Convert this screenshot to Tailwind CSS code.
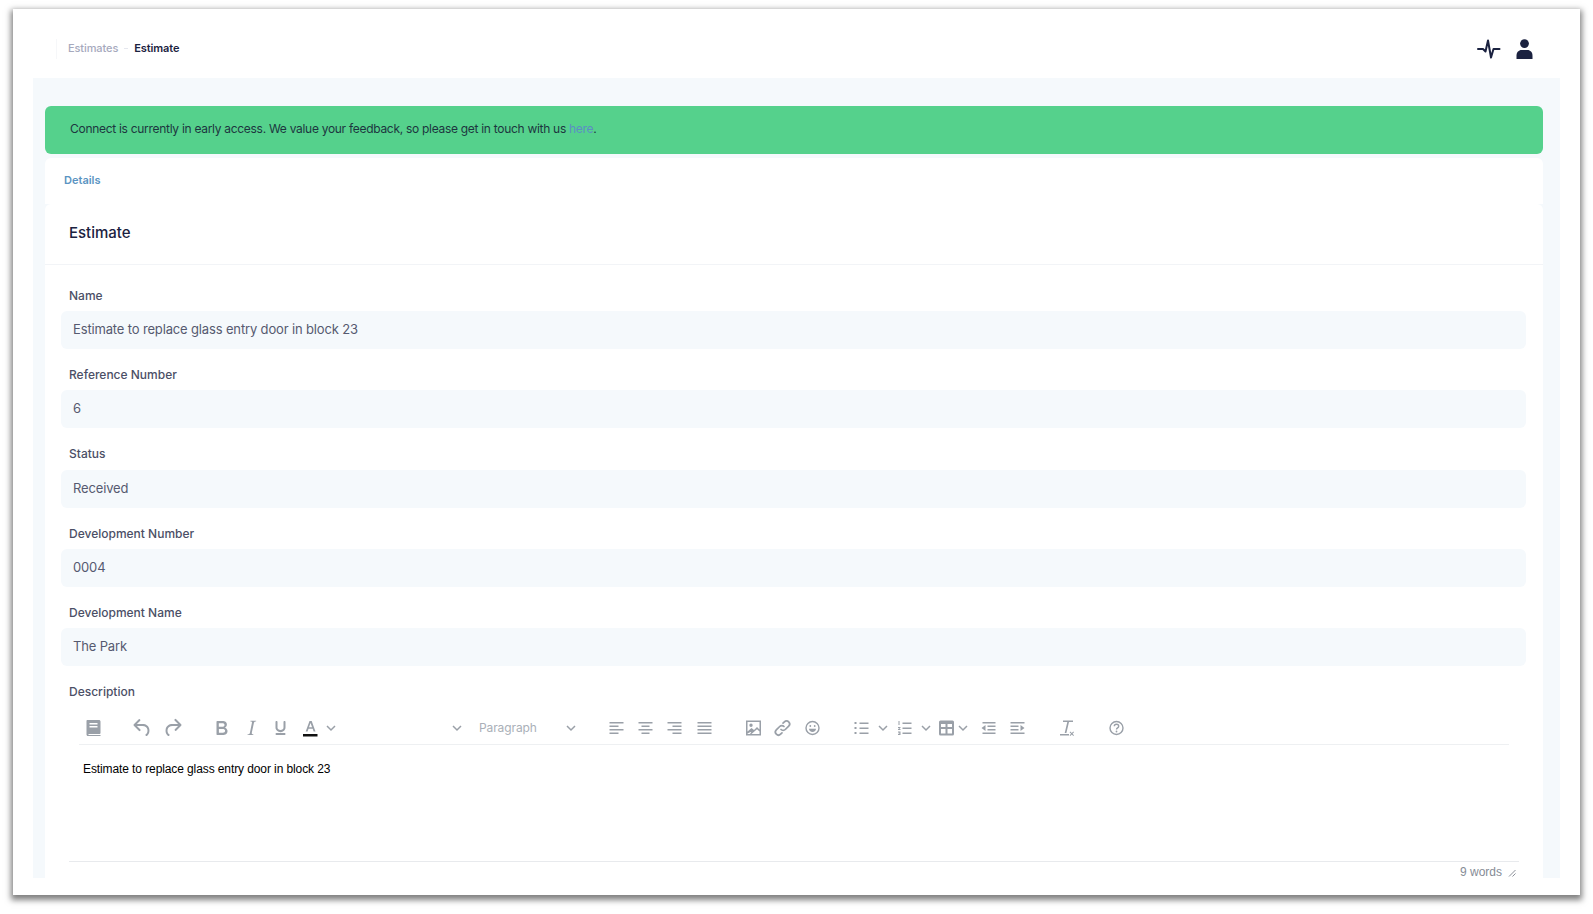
<!DOCTYPE html>
<html lang="en">
<head>
  <meta charset="UTF-8">
  <title>Estimate</title>
  <script src="https://cdn.jsdelivr.net/npm/@tailwindcss/browser@4"></script>
</head>
<body class="bg-white h-screen overflow-hidden font-['Inter','Liberation_Sans',sans-serif]">

  <!-- Window -->
  <div class="ml-[13px] mt-[9px] w-[1567px] h-[886px] px-5 bg-white shadow-[0_3px_6px_2px_rgba(0,0,0,0.5)]">

    <!-- Top bar -->
    <header class="h-[69px] pt-[10px] flex items-center justify-between">
      <nav class="flex items-center h-5 ml-[23px] pl-[11px] border-l border-[#f6f7f9] text-[11px] font-medium tracking-[-0.1px]">
        <span class="text-[#a6a9bd]">Estimates</span>
        <span class="w-[4px] h-px mx-[6px] bg-[#e5e7ee]"></span>
        <span class="text-[#1b2240] font-semibold">Estimate</span>
      </nav>
      <div class="flex items-center gap-[15px] mr-[27px]">
        <svg class="w-[24px] h-[20px]" viewBox="0 0 24 20" fill="none" stroke="#1b2240" stroke-width="2" stroke-linecap="round" stroke-linejoin="round"><path d="M1 10h5l2.500 2.500 2.500-11 3 17 2.500-8.500h6"/></svg>
        <svg class="w-[17px] h-[20px]" viewBox="0 0 17 20" fill="#1b2240"><circle cx="8.500" cy="4.600" r="4.400"/><path d="M0.500 20v-3.500c0-3.200 2.300-5.500 5-5.500h6c2.700 0 5 2.300 5 5.500V20z"/></svg>
      </div>
    </header>

    <!-- Main area -->
    <main class="h-[800px] bg-[#f5f9fc] pt-7 pl-3 pr-[17px] overflow-hidden">
      <div class="h-12 pb-[2px] flex items-center pl-[25px] rounded-md bg-[#55d18c] text-[12px] text-[#1d3640] tracking-[-0.29px]">
        <p>Connect is currently in early access. We value your feedback, so please get in touch with us <a class="text-[#5b8fc4]">here</a>.</p>
      </div>

      <div class="h-[46px] mt-1 pb-[2px] flex items-center pl-[19px] rounded-t-md bg-white text-[11px] font-semibold text-[#5a94c2]">Details</div>

      <section class="h-[674px] bg-white rounded-t-md">
        <div class="h-[61px] pb-[2px] flex items-center pl-6 border-b border-[#f2f4f7] text-[15px] font-medium text-[#1b2240]">Estimate</div>

        <div class="pt-[22px] pl-4 pr-[17px]">
          <div class="flex flex-col gap-[17px] text-[#565a70] tracking-[-0.15px]">
            <div>
              <label class="block h-[18px] mb-1.5 pl-2 text-[12px] leading-[18px] font-medium text-[#4b4f66] tracking-normal">Name</label>
              <div class="h-[38px] flex items-center pl-3 rounded-md bg-[#f5f9fc] text-[13px]">Estimate to replace glass entry door in block 23</div>
            </div>
            <div>
              <label class="block h-[18px] mb-1.5 pl-2 text-[12px] leading-[18px] font-medium text-[#4b4f66] tracking-normal">Reference Number</label>
              <div class="h-[38px] flex items-center pl-3 rounded-md bg-[#f5f9fc] text-[13px]">6</div>
            </div>
            <div>
              <label class="block h-[18px] mb-[7px] pl-2 text-[12px] leading-[18px] font-medium text-[#4b4f66] tracking-normal">Status</label>
              <div class="h-[38px] flex items-center pl-3 rounded-md bg-[#f5f9fc] text-[13px]">Received</div>
            </div>
            <div>
              <label class="block h-[18px] mb-1.5 pl-2 text-[12px] leading-[18px] font-medium text-[#4b4f66] tracking-normal">Development Number</label>
              <div class="h-[38px] flex items-center pl-3 rounded-md bg-[#f5f9fc] text-[13px]">0004</div>
            </div>
            <div>
              <label class="block h-[18px] mb-1.5 pl-2 text-[12px] leading-[18px] font-medium text-[#4b4f66] tracking-normal">Development Name</label>
              <div class="h-[38px] flex items-center pl-3 rounded-md bg-[#f5f9fc] text-[13px]">The Park</div>
            </div>
            <label class="block h-[18px] pl-2 text-[12px] leading-[18px] font-medium text-[#4b4f66] tracking-normal">Description</label>
          </div>

          <!-- Editor -->
          <div class="mt-[10px] ml-2 mr-[7px] h-[166px] flex flex-col">
            <div class="h-[34px] mx-[10px] flex items-center border-b border-[#eef0f2] text-[#9aa0a8]">
              <svg class="w-[29px] h-6" viewBox="0 0 24 24" fill="currentColor"><path d="M6 4h11.500c.8 0 1.500.7 1.500 1.500V17c0 .5-.4 1-1 1H7v1h12v1H6.500C5.600 20 5 19.300 5 18.500V5c0-.6.4-1 1-1zm2 3v1.500h8V7zm0 3v1.500h8V10z"/></svg>
              <svg class="ml-5 w-[29px] h-6" viewBox="0 0 24 24" fill="currentColor"><path d="M6.400 8H12c3.700 0 6.200 2 6.800 5.100.6 2.700-.4 5.600-2.300 6.800a1 1 0 0 1-1-1.800c1.100-.6 1.800-2.700 1.400-4.600-.5-2.100-2.100-3.500-4.900-3.500H6.400l3.300 3.300a1 1 0 1 1-1.400 1.400l-5-5a1 1 0 0 1 0-1.400l5-5a1 1 0 0 1 1.400 1.400L6.400 8z"/></svg>
              <svg class="ml-[1px] w-[29px] h-6" viewBox="0 0 24 24" fill="currentColor"><path d="M17.600 10H12c-2.800 0-4.400 1.400-4.900 3.500-.4 2 .3 4 1.400 4.600a1 1 0 1 1-1 1.800c-2-1.200-2.900-4.100-2.300-6.800.6-3 3-5.100 6.800-5.100h5.600l-3.300-3.300a1 1 0 1 1 1.400-1.400l5 5a1 1 0 0 1 0 1.400l-5 5a1 1 0 0 1-1.400-1.400l3.300-3.300z"/></svg>
              <svg class="ml-5 w-[29px] h-6" viewBox="0 0 24 24" fill="currentColor"><path d="M7.800 19c-.3 0-.5 0-.6-.2l-.2-.5V5.700c0-.2 0-.4.200-.5l.6-.2h5c1.500 0 2.700.3 3.500 1 .7.6 1.100 1.400 1.100 2.500a3 3 0 0 1-.6 1.900c-.4.600-1 1-1.600 1.200.4.100.9.300 1.300.6s.8.700 1 1.200c.4.400.5 1 .5 1.600 0 1.300-.4 2.300-1.300 3-.8.700-2.100 1-3.800 1H7.800zm5-8.300c.6 0 1.200-.1 1.600-.5.400-.3.6-.7.6-1.300 0-1.100-.8-1.700-2.300-1.700H9.300v3.500h3.500zm.5 6c.7 0 1.300-.1 1.700-.4.400-.4.600-.9.600-1.500s-.2-1-.7-1.400c-.4-.3-1-.4-2-.4H9.400v3.700h3.900z"/></svg>
              <svg class="ml-px w-[29px] h-6" viewBox="0 0 24 24" fill="currentColor"><path d="M16.700 4.700l-.1.9h-.3c-.6 0-1 0-1.400.3-.3.3-.4.600-.5 1.100l-2.100 9.800v.6c0 .5.400.8 1.400.8h.2l-.2.800H8l.2-.8h.2c1.100 0 1.800-.5 2-1.500l2-9.800.1-.5c0-.6-.4-.8-1.400-.8h-.3l.2-.9h5.800z"/></svg>
              <svg class="w-[29px] h-6" viewBox="0 0 24 24" fill="currentColor"><path d="M16 5c.6 0 1 .4 1 1v5.500a4 4 0 0 1-.4 1.800l-1 1.400a5.300 5.300 0 0 1-5.500 1 5 5 0 0 1-1.600-1c-.5-.4-.8-.9-1.100-1.400a4 4 0 0 1-.4-1.800V6c0-.6.400-1 1-1s1 .4 1 1v5.500c0 .3 0 .6.200 1l.6.700a3.300 3.300 0 0 0 2.200.8 3.400 3.400 0 0 0 2.200-.8c.3-.2.400-.5.600-.8l.2-.9V6c0-.6.400-1 1-1zM8 17h8c.6 0 1 .4 1 1s-.4 1-1 1H8a1 1 0 0 1 0-2z"/></svg>
              <svg class="ml-px w-[29px] h-6" viewBox="0 0 24 24" fill="currentColor"><path d="M6 18h13v2.500H4.500V18z" fill="#111"/><path d="M11 5h2.200l3.800 10.500h-1.900l-.9-2.700h-4.200l-.9 2.700H7.200zm-.5 6.300h3.100L12 6.900z"/></svg>
              <svg class="w-3 h-6" viewBox="0 0 12 24" fill="none" stroke="currentColor" stroke-width="1.500"><path d="M2 10l4 4 4-4"/></svg>
              <svg class="ml-[114px] w-3 h-6" viewBox="0 0 12 24" fill="none" stroke="currentColor" stroke-width="1.500"><path d="M2 10l4 4 4-4"/></svg>
              <span class="ml-4 w-[86px] text-[12px] text-[#aab0b8] tracking-[-0.1px]">Paragraph</span>
              <svg class="w-3 h-6" viewBox="0 0 12 24" fill="none" stroke="currentColor" stroke-width="1.500"><path d="M2 10l4 4 4-4"/></svg>
              <svg class="ml-[25px] w-[29px] h-6" viewBox="0 0 24 24" fill="currentColor"><path d="M5 6h14v1.500H5zm0 3.500h9V11H5zM5 13h14v1.500H5zm0 3.500h9V18H5z"/></svg>
              <svg class="w-[29px] h-6" viewBox="0 0 24 24" fill="currentColor"><path d="M5 6h14v1.500H5zm3 3.500h8V11H8zM5 13h14v1.500H5zm3 3.500h8V18H8z"/></svg>
              <svg class="w-[29px] h-6" viewBox="0 0 24 24" fill="currentColor"><path d="M5 6h14v1.500H5zm5 3.500h9V11h-9zM5 13h14v1.500H5zm5 3.500h9V18h-9z"/></svg>
              <svg class="ml-px w-[29px] h-6" viewBox="0 0 24 24" fill="currentColor"><path d="M5 6h14v1.500H5zm0 3.500h14V11H5zM5 13h14v1.500H5zm0 3.500h14V18H5z"/></svg>
              <svg class="ml-5 w-[29px] h-6" viewBox="0 0 24 24" fill="currentColor"><path d="M4.500 4.500h15v15h-15zM6 6v9.500l4-3.500 2.500 2 3-3L18 13.500V6zm12 9.500l-2.500-2.200-5.500 4.700h8zM6 17.500V18h2.300l1.500-1.400-.8-.6zM9.500 7.500a1.700 1.700 0 1 1 0 3.400 1.700 1.700 0 0 1 0-3.400z"/></svg>
              <svg class="w-[29px] h-6" viewBox="0 0 24 24" fill="none" stroke="currentColor" stroke-width="1.700" stroke-linecap="round"><path d="M10.500 13.500a3 3 0 0 0 4.300 0l3.400-3.400a3 3 0 0 0-4.300-4.300L12.500 7.200"/><path d="M13.500 10.500a3 3 0 0 0-4.300 0l-3.400 3.400a3 3 0 0 0 4.300 4.300l1.400-1.400"/></svg>
              <svg class="ml-px w-[29px] h-6" viewBox="0 0 24 24" fill="none" stroke="currentColor" stroke-width="1.400"><circle cx="12" cy="12" r="6.500"/><path d="M8.500 12.800h7c0 2-1.500 3.200-3.500 3.200s-3.500-1.200-3.500-3.200z" fill="currentColor" stroke="none"/><circle cx="9.800" cy="10" r=".9" fill="currentColor" stroke="none"/><circle cx="14.200" cy="10" r=".9" fill="currentColor" stroke="none"/></svg>
              <svg class="ml-5 w-[29px] h-6" viewBox="0 0 24 24" fill="currentColor"><path d="M10 6.500h9V8h-9zm0 5h9V13h-9zm0 5h9V18h-9zM5 6h2v2H5zm0 5h2v2H5zm0 5h2v2H5z"/></svg>
              <svg class="ml-px w-3 h-6" viewBox="0 0 12 24" fill="none" stroke="currentColor" stroke-width="1.500"><path d="M2 10l4 4 4-4"/></svg>
              <svg class="ml-px w-[29px] h-6" viewBox="0 0 24 24" fill="currentColor"><path d="M10 6.500h9V8h-9zm0 5h9V13h-9zm0 5h9V18h-9zM6 5h1v4H6zM5.500 11H8v.8l-1.300 1.200H8v1H5.500v-.8L6.800 12H5.500zm0 4.500H8v3.500H5.500V18H7v-.4H6v-.8h1v-.4H5.500z"/></svg>
              <svg class="ml-px w-3 h-6" viewBox="0 0 12 24" fill="none" stroke="currentColor" stroke-width="1.500"><path d="M2 10l4 4 4-4"/></svg>
              <svg class="w-[29px] h-6" viewBox="0 0 24 24" fill="currentColor"><path d="M6 4.500h12A1.500 1.500 0 0 1 19.500 6v12a1.500 1.500 0 0 1-1.500 1.500H6A1.500 1.500 0 0 1 4.500 18V6A1.500 1.500 0 0 1 6 4.500zM6.500 8v3H11V8zM13 8v3h4.500V8zm-6.500 5v4.500H11V13zm6.500 0v4.500h4.500V13z"/></svg>
              <svg class="-ml-[4px] w-3 h-6" viewBox="0 0 12 24" fill="none" stroke="currentColor" stroke-width="1.500"><path d="M2 10l4 4 4-4"/></svg>
              <svg class="ml-[5px] w-[29px] h-6" viewBox="0 0 24 24" fill="currentColor"><path d="M6 6h13v1.500H6zm5 3.500h8V11h-8zm0 3.500h8v1.500h-8zM6 16.500h13V18H6zM9 9v6l-4-3z"/></svg>
              <svg class="w-[29px] h-6" viewBox="0 0 24 24" fill="currentColor"><path d="M5 6h14v1.500H5zm0 3.500h8V11H5zM5 13h8v1.500H5zm0 3.500h14V18H5zM15 9v6l4-3z"/></svg>
              <svg class="ml-5 w-[29px] h-6" viewBox="0 0 24 24" fill="currentColor"><path d="M8.500 4.500h10V6h-4l-2.600 11h-1.700L12.800 6H8.500zM5.500 18h9v1.500h-9zM15.800 15.500l1.500 1.500 1.500-1.500.7.700-1.500 1.500 1.500 1.500-.7.700-1.500-1.500-1.500 1.500-.7-.7 1.500-1.500-1.500-1.500z"/></svg>
              <svg class="ml-[21px] w-[29px] h-6" viewBox="0 0 24 24" fill="none" stroke="currentColor" stroke-width="1.400"><circle cx="12" cy="12" r="6.500"/><path d="M9.800 10.300c0-1.300 1-2.100 2.200-2.100s2.200.8 2.200 2c0 1.700-2.200 1.600-2.200 3.300"/><circle cx="12" cy="15.500" r=".9" fill="currentColor" stroke="none"/></svg>
            </div>
            <div class="flex-1 pl-[14px] pt-[15px] font-['Liberation_Sans',sans-serif] text-[12px] leading-[18px] text-black tracking-[-0.1px]">Estimate to replace glass entry door in block 23</div>
            <div class="h-[16px] pt-[4px] border-t border-[#e8eaed] flex items-center justify-end font-['Liberation_Sans',sans-serif] text-[12px] leading-[12px] text-[#868c96]">
              <span>9 words</span>
              <svg class="ml-[6px] mr-[3px] mt-[3px] w-2 h-2" viewBox="0 0 8 8" fill="none" stroke="#8a8f98"><path d="M1 7.500L7.500 1M4.500 7.500l3-3"/></svg>
            </div>
          </div>
        </div>
      </section>
    </main>
  </div>

</body>
</html>
